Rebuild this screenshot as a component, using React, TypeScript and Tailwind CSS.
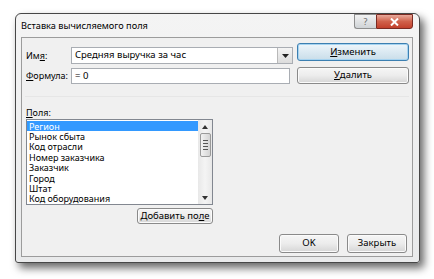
import React from 'react';

const fields: [string, string][] = [
  ['Регион', 'h-[10px]'],
  ['Рынок сбыта', 'h-[10px]'],
  ['Код отрасли', 'h-[11px]'],
  ['Номер заказчика', 'h-[10px]'],
  ['Заказчик', 'h-[11px]'],
  ['Город', 'h-[10px]'],
  ['Штат', 'h-[10px]'],
  ['Код оборудования', 'h-[11px]'],
];

const Btn: React.FC<{ children: React.ReactNode; className?: string; focused?: boolean }> = ({ children, className = '', focused }) => (
  <div
    className={
      'flex items-center justify-center rounded-[3px] border text-[9.5px] text-black ' +
      (focused
        ? 'border-[#3c7fb1] bg-gradient-to-b from-[#eef6fb] via-[#dbe9f2] to-[#c9dde9] shadow-[inset_0_0_0_1px_#a6d3f0] '
        : 'border-[#8a8a8a] bg-gradient-to-b from-[#f6f6f6] via-[#ececec] to-[#d6d6d6] shadow-[inset_0_0_0_1px_#fbfbfb] ') +
      className
    }
  >
    {children}
  </div>
);

export default function App() {
  return (
    <div className="w-[434px] h-[279px] bg-white pl-[15px] pt-[13px] overflow-hidden" style={{ fontFamily: '"Noto Sans", "Open Sans", sans-serif' }}>
      {/* window */}
      <div className="w-[405px] h-[250px] border border-[#474747] rounded-t-[6px] rounded-b-[3px] bg-gradient-to-b from-[#f4f4f4] to-[#e9eaeb] shadow-[4px_5px_8px_rgba(0,0,0,0.6)] flex flex-col pl-[5px] pr-[6px] pb-[5px]">
        {/* title bar */}
        <div className="h-[23px] flex justify-between items-start">
          <span className="pt-[6px] text-[9.2px] text-black leading-[12px]">Вставка вычисляемого поля</span>
          <div className="flex">
            <div className="w-[22px] h-[15px] border border-[#8d8d8d] border-r-0 rounded-bl-[3px] bg-gradient-to-b from-[#f2f2f2] to-[#cfd3d6] flex items-center justify-center text-[9px] text-[#6a6a6a] leading-none">?</div>
            <div className="w-[37px] h-[15px] border border-[#7a2a22] rounded-br-[3px] bg-gradient-to-b from-[#e8a99b] via-[#d0614b] to-[#c2402c] flex items-center justify-center">
              <svg width="9" height="8" viewBox="0 0 9 8">
                <path d="M1 0.5 L8 7.5 M8 0.5 L1 7.5" stroke="#fff" strokeWidth="2" />
              </svg>
            </div>
          </div>
        </div>

        {/* client area */}
        <div className="flex-1 border border-[#9c9c9c] bg-[#f0f0f0] flex flex-col px-[3px] pb-[3px] pt-[5px] text-[9px] text-black">
          <div className="flex">
            <div className="flex flex-col gap-[4px] pt-[4px]">
              <div className="flex items-center">
                <span className="w-[46px] pl-[1px]">Им<u>я</u>:</span>
                <div className="w-[222px] h-[17px] border border-[#a9adb3] bg-white flex items-center justify-between pl-[3px] text-[9.5px]">
                  <span>Средняя выручка за час</span>
                  <div className="w-[15px] h-[15px] border-l border-[#b9b9b9] bg-gradient-to-b from-[#f4f4f4] to-[#dcdcdc] flex items-center justify-center">
                    <svg width="7" height="4" viewBox="0 0 7 4"><path d="M0 0 H7 L3.5 4 Z" fill="#222" /></svg>
                  </div>
                </div>
              </div>
              <div className="flex items-center">
                <span className="w-[46px] pl-[1px]"><u>Ф</u>ормула:</span>
                <div className="w-[219px] h-[16px] border border-[#a9adb3] bg-white flex items-center pl-[3px] text-[9.5px]">= 0</div>
              </div>
            </div>
            <div className="ml-[4px] flex flex-col gap-[6px]">
              <Btn focused className="w-[112px] h-[18px]"><u>И</u>зменить</Btn>
              <Btn className="w-[112px] h-[17px]"><u>У</u>далить</Btn>
            </div>
          </div>

          <div className="mt-[12px] h-px bg-[#e6e6e6]" />

          <span className="mt-[10px] pl-[1px] leading-[11px]"><u>П</u>оля:</span>
          <div className="mt-[1px] ml-[1px] w-[187px] h-[86px] border border-[#828790] bg-white flex">
            <div className="flex-1 flex flex-col pt-px">
              {fields.map(([f, h], i) => (
                <div
                  key={f}
                  className={'flex items-center shrink-0 pl-[2px] whitespace-nowrap leading-none ' + h + (i === 0 ? ' bg-[#3399ff] text-white' : '')}
                >
                  {f}
                </div>
              ))}
            </div>
            <div className="w-[14px] bg-gradient-to-r from-[#e8e8e8] via-[#f4f4f4] to-[#e8e8e8] flex flex-col items-center">
              <div className="h-[13px] flex items-center justify-center">
                <svg width="6" height="4" viewBox="0 0 6 4"><path d="M0 4 H6 L3 0 Z" fill="#333" /></svg>
              </div>
              <div className="w-[11px] h-[24px] border border-[#9a9a9a] rounded-[2px] bg-gradient-to-r from-[#f2f2f2] to-[#d4d4d4] flex flex-col items-center justify-center gap-[2px]">
                <div className="w-[5px] h-px bg-[#555]" />
                <div className="w-[5px] h-px bg-[#555]" />
                <div className="w-[5px] h-px bg-[#555]" />
                <div className="w-[5px] h-px bg-[#555]" />
              </div>
              <div className="flex-1" />
              <div className="h-[13px] flex items-center justify-center">
                <svg width="6" height="4" viewBox="0 0 6 4"><path d="M0 0 H6 L3 4 Z" fill="#333" /></svg>
              </div>
            </div>
          </div>
          <div className="flex mt-[3px] ml-[112px]">
            <Btn className="w-[76px] h-[16px]">Добавить по<u>л</u>е</Btn>
          </div>

          <div className="mt-auto flex justify-end gap-[8px] pr-[2px]">
            <Btn className="w-[60px] h-[19px]">OK</Btn>
            <Btn className="w-[60px] h-[19px]">Закрыть</Btn>
          </div>
        </div>
      </div>
    </div>
  );
}
